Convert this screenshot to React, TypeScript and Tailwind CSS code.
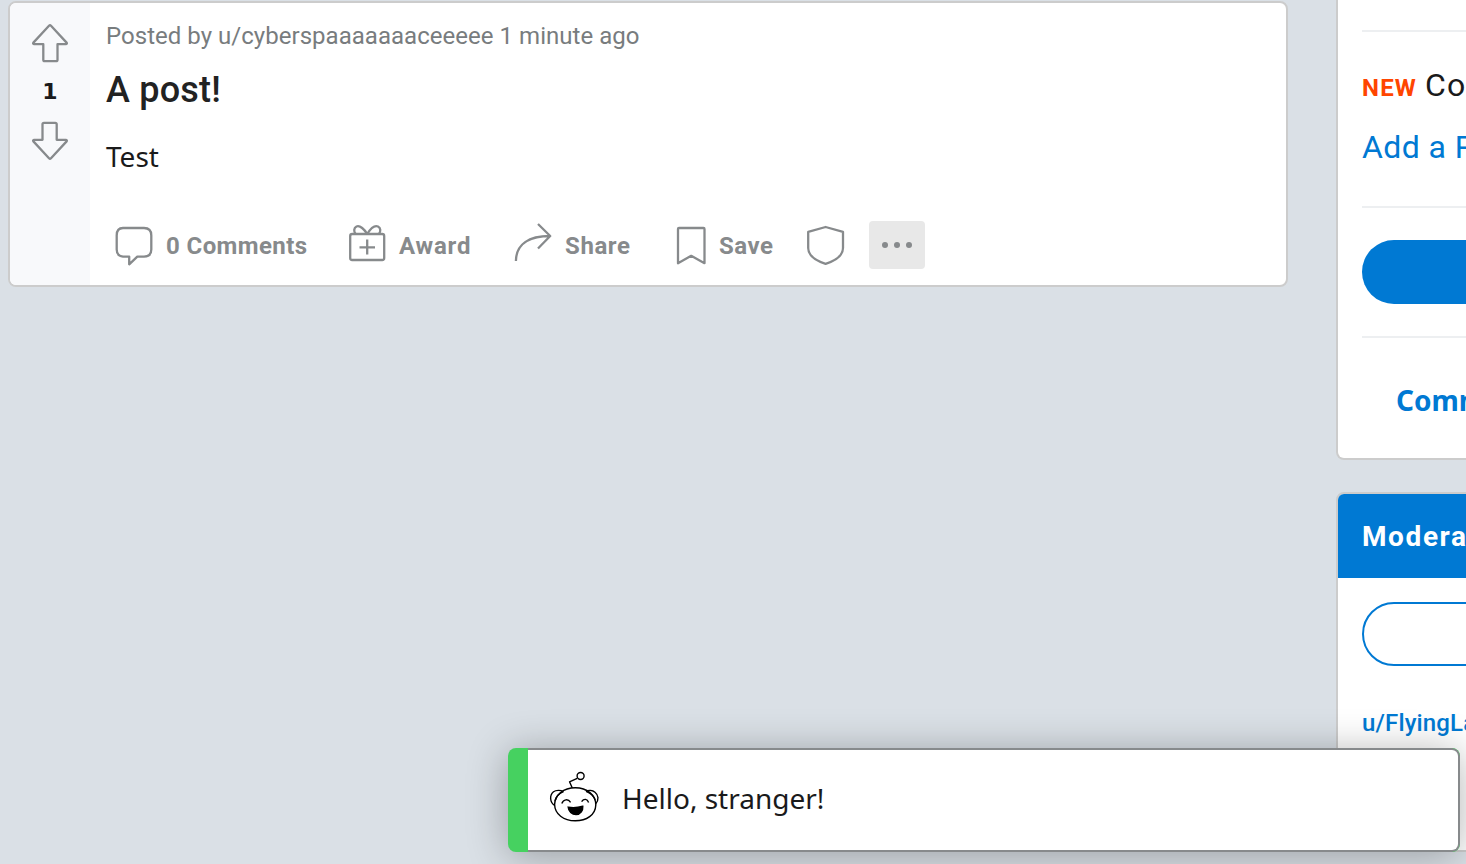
import React from 'react';

type IconProps = { className: string; w: number; h: number; children: React.ReactNode };

function Icon({ className, w, h, children }: IconProps) {
  return (
    <svg
      className={className}
      viewBox={`0 0 ${w} ${h}`}
      width={w}
      height={h}
      fill="none"
      stroke="#878a8c"
      strokeWidth="2.3"
      strokeLinejoin="round"
    >
      {children}
    </svg>
  );
}

function VoteArrow({ className }: { className: string }) {
  return (
    <Icon className={className} w={40} h={40}>
      <path d="M19 2.8Q20 1.8 21 2.8L36.6 19.6Q37.4 21 36 21.2H27.5V36.7Q27.5 38.2 26 38.2H14.8Q13.3 38.2 13.3 36.7V21.2H4Q2.6 21 3.4 19.6Z" />
    </Icon>
  );
}

function Snoo() {
  return (
    <svg className="mb-1.5 ml-5 shrink-0" width="52" height="56" viewBox="0 0 52 56" fill="none" stroke="#000" strokeWidth="1.4">
      <path d="M27.3 20.8C39 20.8 47.8 28 47.8 38C47.5 48 38.5 53.8 27.3 53.8C15.5 53.8 6.8 47 6.6 37.5C6.8 28 15.5 20.8 27.3 20.8Z" />
      <path d="M24.3 21L21.5 14.8L29.2 11.3" strokeLinejoin="round" />
      <circle cx="32.6" cy="9" r="3.5" />
      <path d="M6.6 38.5C1.5 35 1.5 28 5.5 24.8C8 23 12.5 23 15.5 24.6M7 34C8 29.5 11 26.5 15.5 24.6" />
      <path d="M47.6 37C51.2 33 50.5 28 47 25.2C44.5 23.2 40.5 23 38 24.3M38 24.3C42.5 26 45.8 29 47.2 33" />
      <path d="M13.8 36.4C15.4 32.3 20 31.4 22.6 35.3M33.6 34.6C36 31.3 39.3 31.8 40.6 35.5" />
      <path d="M20.2 40.2C25 41 30 40.6 34.8 39.3C35.2 43.5 32.3 47.6 28 47.6C24 47.6 20.5 44.5 20.2 40.2Z" fill="#000" />
    </svg>
  );
}

function PostCard() {
  return (
    <article className="mt-px ml-2 flex h-[286px] w-[1280px] shrink-0 overflow-hidden rounded-lg border-2 border-[#cccccc] bg-white">
      <div className="flex w-20 shrink-0 flex-col items-center bg-[#f8f9fb] pt-5">
        <VoteArrow className="block" />
        <div className="flex h-[58px] items-center pb-[2px] font-['DejaVu_Sans',sans-serif] text-[22px] font-bold text-[#1a1a1b]">1</div>
        <VoteArrow className="block rotate-180" />
      </div>
      <div className="flex flex-1 flex-col pl-4">
        <p className="mt-[15px] h-9 text-[24px] leading-9 tracking-[0.03px] whitespace-nowrap text-[#787c7e]">
          Posted by u/cyberspaaaaaaaceeeee 1 minute ago
        </p>
        <h1 className="mt-3 h-12 text-[36px] leading-[48px] font-medium tracking-[0.2px] text-[#222222]">A post!</h1>
        <p className="mt-[22px] h-10 font-['Noto_Sans',sans-serif] text-[28px] leading-10 text-[#1a1a1b]">Test</p>
        <div className="mt-[45px] flex h-12 items-center text-[24px] leading-8 font-bold text-[#878a8c]">
          <div className="flex w-[233px] items-center">
            <Icon className="ml-2 shrink-0" w={40} h={44}>
              <path d="M9 5H30Q37.3 5 37.3 12.5V26.5Q37.3 33.6 30 33.6H23.3L15.2 41.3V33.6H9Q2.7 33 2.7 26.5V12.5Q2.7 5 9 5Z" />
            </Icon>
            <span className="mt-[2px] ml-3 tracking-[0.4px] whitespace-nowrap">0 Comments</span>
          </div>
          <div className="flex w-[166px] items-center">
            <Icon className="mb-[2px] ml-2 shrink-0" w={40} h={44}>
              <rect x="3.2" y="12" width="34" height="26" rx="2" />
              <path d="M20.2 17.5V32.6M12.5 25.3H28M20.2 12C17.5 7.5 13 3 9.5 4.5C6.5 6 6.8 9.5 8.5 12M20.2 12C23 7.5 27.5 3 31 4.5C34 6 33.7 9.5 32 12" />
            </Icon>
            <span className="mt-[2px] ml-[12px] tracking-[0.8px]">Award</span>
          </div>
          <div className="flex w-[161px] items-center">
            <Icon className="mb-[2px] ml-2 shrink-0" w={40} h={44}>
              <path d="M2.9 39C3.2 22 16 14 37 14M25 2L37.2 14L25 26.5" />
            </Icon>
            <span className="mt-[2px] ml-[12px] tracking-[0.6px]">Share</span>
          </div>
          <div className="flex w-[132px] items-center">
            <Icon className="mb-[2px] ml-[8px] shrink-0" w={32} h={44}>
              <path d="M5 6H29.5Q30.5 6 30.5 7V41.2L17.2 33.8L4 41.2V7Q4 6 5 6Z" />
            </Icon>
            <span className="mt-[2px] ml-[13px] tracking-[0.5px]">Save</span>
          </div>
          <Icon className="mb-[2px] ml-[7px] shrink-0" w={40} h={44}>
            <path d="M3.2 9.8L20.6 5L38 9.8V26C38 34 31 38.5 20.6 41.8C10.2 38.5 3.2 34 3.2 26Z" />
          </Icon>
          <div className="ml-6 flex h-12 w-14 items-center justify-center gap-[6px] rounded bg-[#e8e8e8]">
            <span className="size-[6px] rounded-full bg-[#878a8c]" />
            <span className="size-[6px] rounded-full bg-[#878a8c]" />
            <span className="size-[6px] rounded-full bg-[#878a8c]" />
          </div>
        </div>
      </div>
    </article>
  );
}

function Sidebar() {
  return (
    <aside className="ml-12 flex w-[624px] shrink-0 flex-col gap-8">
      <section className="h-[460px] rounded-b-lg border-2 border-t-0 border-[#cccccc] bg-white px-6 pt-[30px]">
        <div className="h-[178px] border-y-2 border-[#edeff1] whitespace-nowrap">
          <div className="mt-[31px] flex h-11 items-baseline leading-[44px]">
            <span className="text-[24px] font-bold tracking-[1.2px] text-[#ff4500]">NEW</span>
            <span className="ml-2 text-[32px] tracking-[1.2px] text-[#1a1a1b]">Community topics</span>
          </div>
          <div className="mt-[18px] h-11 text-[32px] leading-[44px] tracking-[0.4px] text-[#0079d3]">Add a Primary Topic</div>
        </div>
        <div className="mt-8 h-16 rounded-full bg-[#0079d3]" />
        <div className="mt-8 border-t-2 border-[#edeff1] pt-[42px] pl-[34px] font-['Noto_Sans',sans-serif] text-[28px] leading-10 font-bold text-[#0079d3]">
          Community options
        </div>
      </section>
      <section className="h-[360px] overflow-hidden rounded-lg border-2 border-[#cccccc] bg-white">
        <h2 className="h-[84px] bg-[#0079d3] pt-px pl-6 text-[28px] leading-[84px] font-bold tracking-[1.6px] text-white">Moderators</h2>
        <div className="mt-6 ml-6 h-16 w-[572px] rounded-full border-2 border-[#0079d3]" />
        <div className="mt-[39px] ml-6 text-[24px] leading-9 font-medium tracking-[0.15px] text-[#0079d3]">u/FlyingLaptop</div>
      </section>
    </aside>
  );
}

function Toast() {
  return (
    <div className="absolute top-[748px] left-[508px] flex h-[104px] w-[952px] items-stretch overflow-hidden rounded-lg bg-[#46d160] shadow-[0_4px_40px_rgba(0,0,0,0.3)]">
      <div className="w-5 shrink-0" />
      <div className="flex flex-1 items-center rounded-r-lg border-y-2 border-r-2 border-[#878a8c] bg-white pb-1">
        <Snoo />
        <span className="ml-[22px] font-['Noto_Sans',sans-serif] text-[28px] text-[#1a1a1b]">Hello, stranger!</span>
      </div>
    </div>
  );
}

export default function App() {
  return (
    <main className="relative flex h-[864px] w-full items-start overflow-hidden bg-[#dae0e6] font-['Roboto','Noto_Sans',sans-serif]">
      <PostCard />
      <Sidebar />
      <Toast />
    </main>
  );
}
